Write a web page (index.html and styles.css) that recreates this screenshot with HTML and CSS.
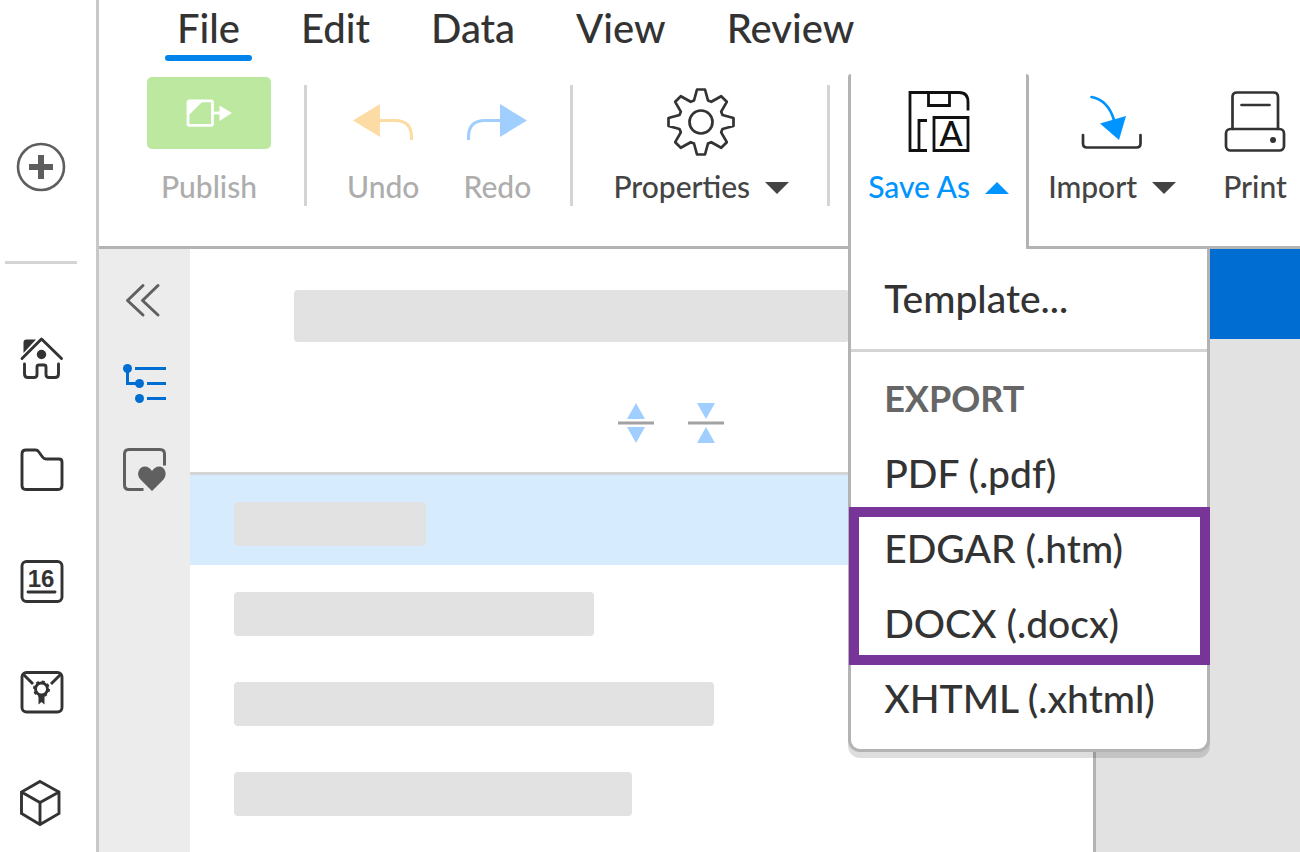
FILE: index.html
```
<!DOCTYPE html>
<html lang="en">
<head>
<meta charset="utf-8">
<meta name="viewport" content="width=device-width, initial-scale=1">
<title>Document editor</title>
<link rel="stylesheet" href="styles.css">
</head>
<body>

<nav class="rail" aria-label="Main">
  <button class="rail-btn rail-add" aria-label="Create">
    <svg width="50" height="50" viewBox="0 0 50 50"><circle cx="25" cy="25" r="23" fill="none" stroke="#5e5e5e" stroke-width="2.6"/><path d="M25 13v24M13 25h24" stroke="#5e5e5e" stroke-width="6"/></svg>
  </button>
  <hr class="rail-line">
  <div class="rail-links">
    <a href="#home" class="rail-btn" aria-label="Home">
      <svg class="icon" viewBox="0 0 48 48"><path d="M5 23.500 24.500 4 44.500 23.500M7.500 29v10q0 3.500 3.500 3.500h6q3 0 3-3V32q0-2 2-2h5q2 0 2 2v7.500q0 3 3 3h6q3.500 0 3.500-3.500V29"/><path class="solid" d="M6.500 18V7.500q0-3 3-3H19z"/><circle class="solid" cx="24.500" cy="19.500" r="4.700"/></svg>
    </a>
    <a href="#files" class="rail-btn" aria-label="Files">
      <svg class="icon" viewBox="0 0 48 48"><path d="M5 8q0-4 4-4h9.500q2 0 3 1.500l4 5.500q1.500 2 3.500 2H42q3 0 3 3v23.500q0 4-4 4H9q-4 0-4-4z"/></svg>
    </a>
    <a href="#calendar" class="rail-btn" aria-label="Calendar">
      <svg class="icon" viewBox="0 0 48 48"><rect x="5" y="4.500" width="40" height="40" rx="4.500"/><path d="M11 35h27"/><text class="day" x="24" y="30" text-anchor="middle">16</text></svg>
    </a>
    <a href="#certifications" class="rail-btn" aria-label="Certifications">
      <svg class="icon" viewBox="0 0 48 48"><rect x="5" y="4.500" width="40" height="39.500" rx="4.500"/><path class="flat" d="M6.500 6.500l9.500 9.500M43.500 6.500L34 16"/><circle cx="24.500" cy="21" r="6"/><circle class="teeth" cx="24.500" cy="21" r="7.500"/><path class="solid" d="M21.500 27h6v9.500l-3-2.500-3 2.500z"/></svg>
    </a>
    <a href="#packages" class="rail-btn" aria-label="Packages">
      <svg class="icon" viewBox="0 0 48 48"><path class="miter" d="M23 2.500l19 10.500v21.500L23 45.500 4.500 34.500V13zM4.500 13L23 23.500 42 13M23 23.500v22"/></svg>
    </a>
  </div>
</nav>

<div class="app">
  <header class="header">
    <nav class="tabs">
      <a href="#file" class="tab active">File</a>
      <a href="#edit" class="tab">Edit</a>
      <a href="#data" class="tab">Data</a>
      <a href="#view" class="tab">View</a>
      <a href="#review" class="tab">Review</a>
    </nav>

    <div class="toolbar">
      <button class="tool publish" disabled>
        <span class="publish-box">
          <svg width="46" height="28" viewBox="0 0 46 28"><rect x="2" y="1.800" width="24.500" height="24.500" rx="1.500" fill="none" stroke="#fff" stroke-width="2.800"/><path d="M2 17V2h15zM33.500 6.500L46 14l-12.500 8z" fill="#fff"/><path d="M27 14h8" stroke="#fff" stroke-width="2.800"/></svg>
        </span>
        <span class="label">Publish</span>
      </button>

      <div class="group history">
        <button class="tool" disabled>
          <svg class="tool-icon" viewBox="0 0 72 72"><path d="M6 34.500L33 18v33z" fill="#fddba5"/><path d="M32 34.500h16q16.500 0 16.500 16.500v3" fill="none" stroke="#fddba5" stroke-width="3"/></svg>
          <span class="label">Undo</span>
        </button>
        <button class="tool" disabled>
          <svg class="tool-icon" viewBox="0 0 72 72"><path d="M66 34.500L39 18v33z" fill="#a0cfff"/><path d="M40 34.500H24Q7.500 34.500 7.500 51v3" fill="none" stroke="#a0cfff" stroke-width="3"/></svg>
          <span class="label">Redo</span>
        </button>
      </div>

      <div class="group settings">
        <button class="tool">
          <svg class="tool-icon line" viewBox="-36 -36 72 72"><path d="M-4-32.500H4L7-21.500 10.300-20.200 20.200-25.800 25.800-20.200 20.200-10.300 21.500-7 32.500-4V4L21.500 7 20.200 10.300 25.800 20.200 20.200 25.800 10.300 20.200 7 21.500 4 32.500H-4L-7 21.500-10.300 20.200-20.200 25.800-25.800 20.200-20.200 10.300-21.500 7-32.500 4V-4L-21.500-7-20.200-10.300-25.800-20.200-20.200-25.800-10.300-20.200-7-21.500z"/><circle r="11.500"/></svg>
          <span class="label">Properties<i class="caret"></i></span>
        </button>
      </div>

      <div class="dropdown">
        <button class="tool open" aria-expanded="true" aria-haspopup="menu">
          <svg class="tool-icon save-icon" viewBox="0 0 72 72"><path d="M24 64.500H7v-58h49Q65 6.500 65 16v8.500M25.500 6.500v13h21v-13M24 34.500h-8v30M31 31.500h34v33H31z"/><text x="48" y="60" text-anchor="middle">A</text></svg>
          <span class="label">Save As<i class="caret up"></i></span>
        </button>

        <!-- Save As menu -->
        <div class="menu" role="menu">
          <button class="menu-item template" role="menuitem">Template...</button>
          <div class="menu-section">
            <div class="menu-title">EXPORT</div>
            <button class="menu-item" role="menuitem">PDF (.pdf)</button>
            <div class="highlight">
              <button class="menu-item" role="menuitem">EDGAR (.htm)</button>
              <button class="menu-item" role="menuitem">DOCX (.docx)</button>
            </div>
            <button class="menu-item" role="menuitem">XHTML (.xhtml)</button>
          </div>
        </div>
      </div>

      <div class="group output">
        <button class="tool">
          <svg class="tool-icon line" viewBox="0 0 72 72"><path d="M7 49v8.500q0 4 4 4h49.500q4 0 4-4V49"/><path class="arrow" d="M15.500 11Q32 14 38 34"/><path class="arrow-head" d="M50 30L24 37.500l19 16.500z"/></svg>
          <span class="label">Import<i class="caret"></i></span>
        </button>
        <button class="tool">
          <svg class="tool-icon line" viewBox="0 0 72 72"><path d="M13.500 43V11q0-4.500 4.500-4.500h36.500q4.500 0 4.500 4.500v32M22.500 19h28"/><rect x="7" y="43" width="58" height="21.500" rx="4.500"/><circle class="dot" cx="54" cy="54" r="3"/></svg>
          <span class="label">Print</span>
        </button>
      </div>
    </div>
  </header>

  <main class="workspace">
    <aside class="sidebar">
      <button class="side-btn" aria-label="Collapse panel">
        <svg class="side-icon" viewBox="0 0 48 48"><path d="M22 9.500l-15.500 15L22 39M37 9.500l-15.500 15L37 39"/></svg>
      </button>
      <button class="side-btn" aria-label="Outline">
        <svg class="side-icon tree" viewBox="0 0 48 48"><path d="M6.500 7.500v15h12M14 7.500h31M26 22.500h19M26 37.500h19"/><circle cx="6.500" cy="7.500" r="4.500"/><circle cx="18.500" cy="22.500" r="4.500"/><circle cx="18.500" cy="37.500" r="4.500"/></svg>
      </button>
      <button class="side-btn" aria-label="Favorites">
        <svg class="side-icon flat" viewBox="0 0 48 48"><path d="M22.500 43.500H8q-4.500 0-4.500-4.500V8q0-4.500 4.500-4.500h31q4.500 0 4.500 4.500v11.500"/><path class="heart" d="M31 45L19.500 33.500C14.500 28.500 18 20.500 24 20.500Q28 20.500 31 25 34 20.500 38 20.500C44 20.500 47 28.500 42.500 33.500z"/></svg>
      </button>
    </aside>

    <section class="outline">
      <div class="search-bar"></div>
      <div class="outline-tools">
        <button class="side-btn" aria-label="Expand all">
          <svg width="36" height="40" viewBox="0 0 36 40"><path d="M18 0l9 16H9zM18 40l9-16H9z" fill="#a0cfff"/><path d="M0 20h36" stroke="#a2a2a2" stroke-width="3"/></svg>
        </button>
        <button class="side-btn" aria-label="Collapse all">
          <svg width="36" height="40" viewBox="0 0 36 40"><path d="M18 16l9-16H9zM18 24l9 16H9z" fill="#a0cfff"/><path d="M0 20h36" stroke="#a2a2a2" stroke-width="3"/></svg>
        </button>
      </div>
      <ul class="outline-list">
        <li class="row selected"><div class="bar" style="width:192px"></div></li>
        <li class="row"><div class="bar" style="width:360px"></div></li>
        <li class="row"><div class="bar" style="width:480px"></div></li>
        <li class="row"><div class="bar" style="width:398px"></div></li>
      </ul>
    </section>

    <section class="canvas">
      <div class="canvas-head"></div>
    </section>
  </main>
</div>

</body>
</html>
```
FILE: styles.css
```
* {
  box-sizing: border-box;
}

body {
  margin: 0;
  display: flex;
  min-height: 100vh;
  font-family: Lato, "Open Sans", sans-serif;
  font-weight: 500;
  color: #333;
  background: #fff;
  overflow: hidden;
}

button {
  padding: 0;
  border: none;
  background: none;
  font: inherit;
  color: inherit;
  cursor: pointer;
}

a {
  color: inherit;
  text-decoration: none;
}

svg {
  display: block;
}

/* Left rail */
.rail {
  flex: none;
  display: flex;
  flex-direction: column;
  align-items: center;
  width: 99px;
  height: 100vh;
  padding: 142px 14px 0 0;
  border-right: 3px solid #c8c8c8;
  overflow: hidden;
}

.rail-btn {
  display: block;
}

.rail-line {
  width: 72px;
  height: 3px;
  margin: 69px 0 71px;
  border: none;
  background: #d4d4d4;
}

.rail-links {
  display: flex;
  flex-direction: column;
  gap: 63px;
}

.icon {
  width: 48px;
  height: 48px;
  fill: none;
  stroke: #333;
  stroke-width: 2.9;
  stroke-linecap: round;
  stroke-linejoin: round;
}

.icon .solid {
  fill: #333;
  stroke: none;
}

.icon .flat {
  stroke-linecap: butt;
}

.icon .miter {
  stroke-linejoin: miter;
}

.icon .teeth {
  stroke-width: 2;
  stroke-linecap: butt;
  stroke-dasharray: 3 2.9;
}

.icon .day {
  fill: #333;
  stroke: none;
  font: bold 24px "Liberation Sans", sans-serif;
}

/* Header with tabs and toolbar */
.app {
  flex: 1;
  min-width: 0;
  display: flex;
  flex-direction: column;
  height: 100vh;
}

.header {
  flex: none;
  padding-top: 4px;
}

.tabs {
  display: flex;
  gap: 37px;
  padding-left: 66px;
  margin-bottom: 13px;
}

.tab {
  padding: 0 12px 3px;
  border-bottom: 6px solid transparent;
  font-size: 40px;
  line-height: 48px;
}

.tab.active {
  position: relative;
}

.tab.active::after {
  content: "";
  position: absolute;
  left: 0;
  right: 0;
  bottom: -6px;
  height: 6px;
  border-radius: 3px;
  background: #0084ea;
}

.toolbar {
  display: flex;
  height: 175px;
  padding-left: 48px;
  border-bottom: 3px solid #b3b3b3;
}

.group {
  display: flex;
  flex: none;
}

.tool {
  flex: none;
  display: flex;
  flex-direction: column;
  align-items: center;
  height: 172px;
  padding-top: 12px;
  color: #444;
}

.tool:disabled {
  color: #adadad;
  cursor: default;
}

.tool-icon {
  width: 72px;
  height: 72px;
  margin-bottom: 10px;
}

.label {
  display: flex;
  align-items: center;
  font-size: 30px;
  line-height: 36px;
  white-space: nowrap;
}

.caret {
  margin: 3px 0 0 15px;
  border: 12px solid transparent;
  border-top-color: #444;
  border-bottom: none;
}

.caret.up {
  border-top: none;
  border-bottom: 12px solid #0094ff;
}

.publish {
  padding-top: 3px;
  margin-right: 33px;
}

.publish-box {
  display: flex;
  align-items: center;
  justify-content: center;
  width: 124px;
  height: 72px;
  margin-bottom: 19px;
  border-radius: 5px;
  background: #bde8a0;
}

.history,
.settings {
  position: relative;
}

/* Thin lines round the middle groups */
.history::before,
.settings::before,
.settings::after {
  content: "";
  position: absolute;
  top: 11px;
  left: 0;
  width: 3px;
  height: 121px;
  background: #d4d4d4;
}

.settings::after {
  left: auto;
  right: 0;
}

.history {
  gap: 42px;
  padding: 0 37px 0 43px;
}

.settings {
  padding: 0 41px 0 43px;
}

.line {
  fill: none;
  stroke: #333;
  stroke-width: 2.7;
  stroke-linecap: round;
  stroke-linejoin: round;
}

.line .arrow {
  stroke: #0094ff;
}

.line .arrow-head {
  fill: #0094ff;
  stroke: none;
}

.line .dot {
  fill: #333;
  stroke: none;
}

.save-icon {
  fill: none;
  stroke: #111;
  stroke-width: 2.8;
}

.save-icon text {
  fill: #111;
  stroke: none;
  font-size: 34px;
}

.output {
  gap: 43px;
  margin-left: 19px;
}

/* Save As dropdown */
.dropdown {
  position: relative;
  z-index: 1;
  flex: none;
  width: 181px;
  height: 175px;
  margin-left: 18px;
  border: solid #b3b3b3;
  border-width: 0 3px;
  border-radius: 3px;
  background: #fff;
}

.tool.open {
  width: 100%;
  color: #0094ff;
}

.menu {
  position: absolute;
  top: 100%;
  left: -3px;
  width: 362px;
  padding-bottom: 13px;
  border: 3px solid #b3b3b3;
  border-top: none;
  border-radius: 0 0 12px 12px;
  background: #fff;
  box-shadow: 0 6px 0 rgba(0, 0, 0, 0.13);
}

.menu-item,
.menu-title {
  display: block;
  width: 100%;
  padding-left: 33px;
  font-size: 39px;
  line-height: 75px;
  text-align: left;
  white-space: nowrap;
}

.menu-title {
  font-size: 36px;
  font-weight: bold;
  color: #666;
}

.template {
  padding-bottom: 2px;
  line-height: 98px;
  border-bottom: 3px solid #d4d4d4;
}

.menu-section {
  padding-top: 9px;
}

.highlight {
  position: relative;
}

.highlight::after {
  content: "";
  position: absolute;
  top: -4px;
  right: -3px;
  bottom: -4px;
  left: -2px;
  border: 10px solid #773599;
  pointer-events: none;
}

/* Workspace */
.workspace {
  flex: 1;
  min-height: 0;
  display: grid;
  grid-template-columns: 91px 1fr 207px;
}

.sidebar {
  display: flex;
  flex-direction: column;
  align-items: center;
  gap: 37px;
  padding-top: 27px;
  background: #ececec;
}

.side-icon {
  width: 48px;
  height: 48px;
  fill: none;
  stroke: #606060;
  stroke-width: 3;
  stroke-linecap: round;
  stroke-linejoin: round;
}

.side-icon.tree {
  stroke: #006dd2;
  stroke-linecap: butt;
  stroke-linejoin: miter;
}

.side-icon.tree circle {
  fill: #006dd2;
  stroke: none;
}

.side-icon.flat {
  stroke-linecap: butt;
}

.side-icon .heart {
  fill: #606060;
  stroke: none;
}

.outline {
  overflow: hidden;
}

.search-bar {
  width: 555px;
  height: 52px;
  margin: 41px 0 61px 104px;
  border-radius: 4px;
  background: #e2e2e2;
}

.outline-tools {
  display: flex;
  justify-content: center;
  gap: 34px;
  padding: 0 0 29px 59px;
}

.outline-list {
  margin: 0;
  padding: 0;
  border-top: 3px solid #d4d4d4;
  list-style-type: none;
}

.row {
  height: 90px;
  padding: 27px 0 0 44px;
}

.row.selected {
  background: #d7ebff;
}

.bar {
  height: 44px;
  border-radius: 4px;
  background: #e2e2e2;
}

.canvas {
  border-left: 3px solid #b3b3b3;
  background: #e2e2e2;
}

.canvas-head {
  height: 90px;
  background: #006dd2;
}
```
